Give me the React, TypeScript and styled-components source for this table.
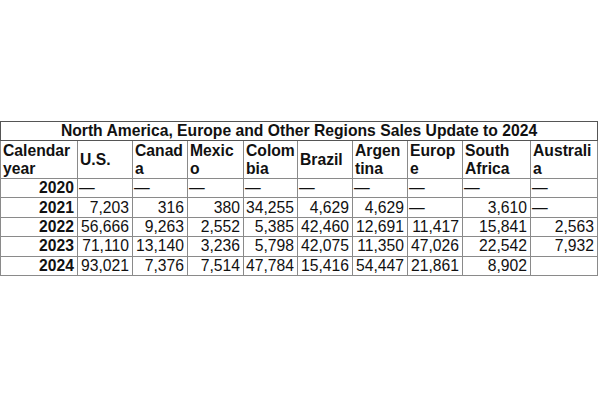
import React from "react";
import styled, { createGlobalStyle } from "styled-components";

const Global = createGlobalStyle`
  html, body { margin: 0; padding: 0; background: #ffffff; }
  body { font-family: "Liberation Sans", Arial, sans-serif; color: #000; }
`;

const Page = styled.div`
  width: 600px;
  height: 400px;
  padding-top: 121px;
  box-sizing: border-box;
`;

const Table = styled.table`
  border-collapse: collapse;
  table-layout: fixed;
  width: 598px;
  font-family: "Liberation Sans", Arial, sans-serif;
  font-size: 15.7px;
  line-height: 18px;
  border: 1px solid #555;
`;

const Cell = styled.td<{ $align?: "left" | "right" | "center"; $bold?: boolean }>`
  border: 1px solid #8a8a8a;
  padding: 0 3px 0 1px;
  height: 18.4px;
  text-align: ${(p) => p.$align ?? "right"};
  font-weight: ${(p) => (p.$bold ? 700 : 400)};
  vertical-align: middle;
  white-space: nowrap;
  color: #111;
`;

const TitleCell = styled.th`
  border: 1px solid #555;
  padding: 0 2px;
  height: 18px;
  text-align: center;
  font-weight: 700;
  color: #111;
`;

const HeadCell = styled.th`
  border: 1px solid #8a8a8a;
  padding: 0 2px;
  height: 37px;
  text-align: left;
  font-weight: 700;
  vertical-align: middle;
  overflow-wrap: anywhere;
  color: #111;
`;

const widths = [77, 55, 55, 56, 54, 55, 55, 55, 68, 67];
const headers = [
  "Calendar year",
  "U.S.",
  "Canada",
  "Mexico",
  "Colombia",
  "Brazil",
  "Argentina",
  "Europe",
  "South Africa",
  "Australia",
];

const D = "—";
const rows: [string, string[]][] = [
  ["2020", [D, D, D, D, D, D, D, D, D]],
  ["2021", ["7,203", "316", "380", "34,255", "4,629", "4,629", D, "3,610", D]],
  ["2022", ["56,666", "9,263", "2,552", "5,385", "42,460", "12,691", "11,417", "15,841", "2,563"]],
  ["2023", ["71,110", "13,140", "3,236", "5,798", "42,075", "11,350", "47,026", "22,542", "7,932"]],
  ["2024", ["93,021", "7,376", "7,514", "47,784", "15,416", "54,447", "21,861", "8,902", ""]],
];

export default function App() {
  return (
    <Page>
      <Global />
      <Table>
        <colgroup>
          {widths.map((w, i) => (
            <col key={i} style={{ width: w }} />
          ))}
        </colgroup>
        <thead>
          <tr>
            <TitleCell colSpan={10}>
              North America, Europe and Other Regions Sales Update to 2024
            </TitleCell>
          </tr>
          <tr>
            {headers.map((h) => (
              <HeadCell key={h}>{h}</HeadCell>
            ))}
          </tr>
        </thead>
        <tbody>
          {rows.map(([year, vals]) => (
            <tr key={year}>
              <Cell $bold>{year}</Cell>
              {vals.map((v, i) => (
                <Cell key={i} $align={v === D ? "left" : "right"}>
                  {v}
                </Cell>
              ))}
            </tr>
          ))}
        </tbody>
      </Table>
    </Page>
  );
}
